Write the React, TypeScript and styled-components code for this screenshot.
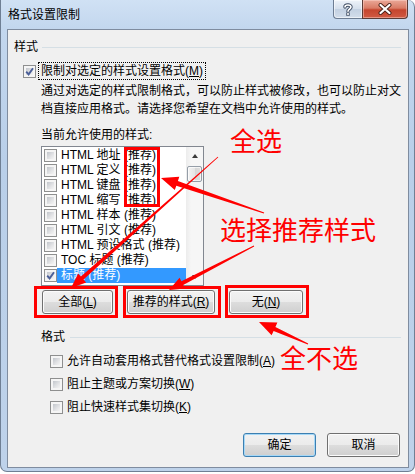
import React from "react";
import styled, { createGlobalStyle } from "styled-components";

const FONT = `"Liberation Sans", "Noto Sans CJK SC", sans-serif`;

const Global = createGlobalStyle`
  html, body { margin: 0; padding: 0; background: #ffffff; }
  body { font-family: ${FONT}; font-size: 12px; color: #000; }
  * { box-sizing: border-box; }
`;

const Window = styled.div`
  position: relative;
  width: 415px;
  height: 472px;
  display: flex;
  flex-direction: column;
  background: linear-gradient(180deg, #d0e1f4 0px, #c3d7ee 28px, #b9cfe9 160px, #bed2ea 100%);
  border: 1px solid #6f7f94;
  border-top: none;
  border-radius: 0 7px 7px 7px;
  overflow: hidden;
`;

const TitleBar = styled.div`
  height: 29px;
  display: flex;
  align-items: flex-start;
  flex: none;
`;

const Title = styled.div`
  padding: 1px 0 0 7px;
  line-height: 28px;
  font-size: 12px;
  color: #000;
`;

const CaptionButtons = styled.div`
  margin-left: auto;
  margin-right: 6px;
  display: flex;
`;

const HelpButton = styled.div`
  width: 29px;
  height: 19px;
  border: 1px solid #6d7d93;
  border-top: none;
  border-right: none;
  border-bottom-left-radius: 4px;
  background: linear-gradient(180deg, #eef3f9 0%, #d6e0ec 48%, #c3d1e2 52%, #d3deeb 100%);
  box-shadow: inset 0 0 0 1px rgba(255, 255, 255, 0.55);
  display: flex;
  align-items: center;
  justify-content: center;
`;

const CloseButton = styled.div`
  width: 46px;
  height: 19px;
  border: 1px solid #5a3b36;
  border-top: none;
  border-bottom-right-radius: 4px;
  background: linear-gradient(180deg, #eaa898 0%, #d97c66 45%, #c5452e 55%, #d15a43 100%);
  box-shadow: inset 0 0 0 1px rgba(255, 220, 210, 0.45);
  display: flex;
  align-items: center;
  justify-content: center;
`;

const Client = styled.div`
  margin: 0 5px 0 6px;
  height: 439px;
  border: 1px solid #7f8c9f;
  background: #f0f0f0;
  display: flex;
  flex-direction: column;
  flex: none;
`;

const GroupHeader = styled.div<{ $top: number; $indent: number }>`
  margin-top: ${(p) => p.$top}px;
  padding-left: ${(p) => p.$indent}px;
  padding-right: 7px;
  height: 16px;
  line-height: 16px;
  display: flex;
  align-items: center;
`;

const Rule = styled.span<{ $gap: number }>`
  flex: 1;
  height: 1px;
  background: #d5dfe5;
  margin-left: ${(p) => p.$gap}px;
`;

const TopOption = styled.div`
  margin-top: 7px;
  padding-left: 15px;
  height: 18px;
  display: flex;
  align-items: center;
`;

const FocusLabel = styled.span`
  margin-left: 2px;
  border: 1px dotted #000;
  padding: 0 2px;
  line-height: 16px;
`;

const Desc = styled.div`
  margin-top: 2px;
  padding-left: 33px;
  line-height: 18px;
  white-space: nowrap;
`;

const DescLine = styled.span`
  display: block;
`;

const Caption = styled.div`
  margin-top: 9px;
  padding-left: 33px;
  line-height: 16px;
`;

const ListBox = styled.div`
  margin-top: 3px;
  margin-left: 33px;
  width: 163px;
  height: 140px;
  border: 1px solid #828790;
  background: #fff;
  display: flex;
  flex: none;
`;

const Rows = styled.div`
  flex: 1;
  padding-top: 1px;
  padding-left: 2px;
  display: flex;
  flex-direction: column;
`;

const Row = styled.div`
  height: 15px;
  display: flex;
  align-items: center;
`;

const RowLabel = styled.span<{ $selected?: boolean }>`
  flex: 1;
  height: 15px;
  line-height: 15px;
  padding-left: 4px;
  white-space: nowrap;
  overflow: hidden;
  background: ${(p) => (p.$selected ? "#3399ff" : "transparent")};
  color: ${(p) => (p.$selected ? "#fff" : "#000")};
`;

const ScrollBar = styled.div`
  width: 17px;
  background: linear-gradient(90deg, #ececec 0%, #f6f6f6 30%, #f6f6f6 100%);
  display: flex;
  flex-direction: column;
  align-items: center;
`;

const ArrowCell = styled.div`
  height: 17px;
  width: 17px;
  display: flex;
  align-items: center;
  justify-content: center;
`;

const Tri = styled.span<{ $down?: boolean }>`
  width: 0;
  height: 0;
  border-left: 3.5px solid transparent;
  border-right: 3.5px solid transparent;
  ${(p) =>
    p.$down
      ? "border-top: 4px solid #3a3a3a;"
      : "border-bottom: 4px solid #3a3a3a;"}
`;

const Thumb = styled.div`
  margin-top: 2px;
  width: 15px;
  height: 16px;
  border: 1px solid #959ea8;
  border-radius: 2px;
  background: linear-gradient(90deg, #f4f4f4 0%, #e6e6e6 50%, #d6d6d6 51%, #dedede 100%);
  box-shadow: inset 0 0 0 1px rgba(255, 255, 255, 0.7);
`;

const Spacer = styled.div`
  flex: 1;
`;

const ButtonRow = styled.div`
  margin-top: 4px;
  padding-left: 34px;
  display: flex;
  gap: 14px;
`;

const Footer = styled.div`
  margin-top: 18px;
  padding-right: 8px;
  display: flex;
  justify-content: flex-end;
  gap: 11px;
`;

const Button = styled.div<{ $w: number; $default?: boolean }>`
  width: ${(p) => p.$w}px;
  height: 24px;
  border: 1px solid ${(p) => (p.$default ? "#3c7fb1" : "#707070")};
  border-radius: 3px;
  background: linear-gradient(180deg, #f2f2f2 0%, #ebebeb 50%, #dddddd 51%, #cfcfcf 100%);
  box-shadow: inset 0 0 0 1px ${(p) => (p.$default ? "#a6d8f7" : "#fbfbfb")};
  display: flex;
  align-items: center;
  justify-content: center;
  line-height: 16px;
  font-size: 12px;
  white-space: nowrap;
`;

const OptionList = styled.div`
  margin-top: 8px;
  padding-left: 42px;
  display: flex;
  flex-direction: column;
  gap: 7px;
`;

const Option = styled.div`
  height: 16px;
  display: flex;
  align-items: center;
`;

const OptionText = styled.span`
  margin-left: 4px;
  line-height: 16px;
  white-space: nowrap;
`;

const TopText = styled.span`
  line-height: 16px;
`;

const Box = styled.span`
  position: relative;
  flex: none;
  width: 13px;
  height: 13px;
  border: 1px solid #8e8f8f;
  padding: 2px;
  background: linear-gradient(135deg, #c2c6cc 0%, #e3e4e6 60%, #f4f4f4 100%) content-box, #f5f5f5;
`;

const CheckMark = styled.svg`
  position: absolute;
  left: 1px;
  top: 1px;
`;

/* ---------- annotations (overlay) ---------- */

const Overlay = styled.div`
  position: absolute;
  inset: 0;
  pointer-events: none;
`;

const RedBox = styled.div<{ $x: number; $y: number; $w: number; $h: number }>`
  position: absolute;
  left: ${(p) => p.$x}px;
  top: ${(p) => p.$y}px;
  width: ${(p) => p.$w}px;
  height: ${(p) => p.$h}px;
  border: 3px solid #ff0000;
`;

const Note = styled.div<{ $x: number; $y: number }>`
  position: absolute;
  left: ${(p) => p.$x}px;
  top: ${(p) => p.$y}px;
  font-family: "Noto Sans CJK SC", sans-serif;
  font-size: 26px;
  line-height: 26px;
  color: #ff0000;
  white-space: nowrap;
`;

const ArrowLayer = styled.svg`
  position: absolute;
  left: 0;
  top: 0;
`;

function Check({ checked }: { checked?: boolean }) {
  return (
    <Box>
      {checked && (
        <CheckMark width="9" height="9" viewBox="0 0 9 9">
          <path d="M1.2 4.6 L3.6 7.4 L8 1.2" fill="none" stroke="#4b5f98" strokeWidth="1.9" />
        </CheckMark>
      )}
    </Box>
  );
}

type Arrow = { t: [number, number]; p: [number, number]; w0: number; w1: number; L: number; H: number };

function arrowPoints(a: Arrow): string {
  const [tx, ty] = a.t;
  const [px, py] = a.p;
  const dx = px - tx;
  const dy = py - ty;
  const len = Math.hypot(dx, dy);
  const ux = dx / len;
  const uy = dy / len;
  const nx = -uy;
  const ny = ux;
  const Nx = px - ux * a.L;
  const Ny = py - uy * a.L;
  const pts: [number, number][] = [
    [tx + (nx * a.w0) / 2, ty + (ny * a.w0) / 2],
    [Nx + (nx * a.w1) / 2, Ny + (ny * a.w1) / 2],
    [Nx + nx * a.H, Ny + ny * a.H],
    [px, py],
    [Nx - nx * a.H, Ny - ny * a.H],
    [Nx - (nx * a.w1) / 2, Ny - (ny * a.w1) / 2],
    [tx - (nx * a.w0) / 2, ty - (ny * a.w0) / 2],
  ];
  return pts.map(([x, y]) => `${x.toFixed(1)},${y.toFixed(1)}`).join(" ");
}

const arrows: Arrow[] = [
  { t: [217, 157], p: [70, 288], w0: 0.8, w1: 4, L: 15, H: 6 },
  { t: [263, 213], p: [160, 178], w0: 1.2, w1: 5, L: 17, H: 7 },
  { t: [253, 246], p: [168, 290], w0: 0.8, w1: 4, L: 15, H: 6 },
  { t: [307, 344], p: [258, 322], w0: 1, w1: 4.5, L: 17, H: 7 },
];

const listItems = [
  "HTML 地址 (推荐)",
  "HTML 定义 (推荐)",
  "HTML 键盘 (推荐)",
  "HTML 缩写 (推荐)",
  "HTML 样本 (推荐)",
  "HTML 引文 (推荐)",
  "HTML 预设格式 (推荐)",
  "TOC 标题 (推荐)",
  "标题 (推荐)",
];

export default function App() {
  return (
    <>
      <Global />
      <Window>
        <TitleBar>
          <Title>格式设置限制</Title>
          <CaptionButtons>
            <HelpButton>
              <svg width="10" height="13" viewBox="0 0 10 13">
                <path
                  d="M2 4 C2 1.5 8 1.2 8 4 C8 6 5 6 5 8.2 M5 10.2 L5 11.8"
                  fill="none"
                  stroke="#3c4a60"
                  strokeWidth="3.4"
                  strokeLinecap="round"
                />
                <path
                  d="M2 4 C2 1.5 8 1.2 8 4 C8 6 5 6 5 8.2 M5 10.2 L5 11.8"
                  fill="none"
                  stroke="#ffffff"
                  strokeWidth="1.6"
                  strokeLinecap="round"
                />
              </svg>
            </HelpButton>
            <CloseButton>
              <svg width="14" height="12" viewBox="0 0 14 12">
                <path d="M2.5 2 L11.5 10 M11.5 2 L2.5 10" stroke="#4a2219" strokeWidth="4" strokeLinecap="round" />
                <path d="M2.5 2 L11.5 10 M11.5 2 L2.5 10" stroke="#ffffff" strokeWidth="2.2" strokeLinecap="round" />
              </svg>
            </CloseButton>
          </CaptionButtons>
        </TitleBar>

        <Client>
          <GroupHeader $top={9} $indent={6}>
            <span>样式</span>
            <Rule $gap={4} />
          </GroupHeader>

          <TopOption>
            <Check checked />
            <FocusLabel>
              <TopText>
                限制对选定的样式设置格式(<u>M</u>)
              </TopText>
            </FocusLabel>
          </TopOption>

          <Desc>
            <DescLine>通过对选定的样式限制格式，可以防止样式被修改，也可以防止对文</DescLine>
            <DescLine>档直接应用格式。请选择您希望在文档中允许使用的样式。</DescLine>
          </Desc>

          <Caption>当前允许使用的样式:</Caption>

          <ListBox>
            <Rows>
              {listItems.map((item, i) => (
                <Row key={item}>
                  <Check checked={i === listItems.length - 1} />
                  <RowLabel $selected={i === listItems.length - 1}>{item}</RowLabel>
                </Row>
              ))}
            </Rows>
            <ScrollBar>
              <ArrowCell>
                <Tri />
              </ArrowCell>
              <Thumb />
              <Spacer />
              <ArrowCell>
                <Tri $down />
              </ArrowCell>
            </ScrollBar>
          </ListBox>

          <ButtonRow>
            <Button $w={71}>
              全部(<u>L</u>)
            </Button>
            <Button $w={88}>
              推荐的样式(<u>R</u>)
            </Button>
            <Button $w={74}>
              无(<u>N</u>)
            </Button>
          </ButtonRow>

          <GroupHeader $top={15} $indent={33}>
            <span>格式</span>
            <Rule $gap={5} />
          </GroupHeader>

          <OptionList>
            <Option>
              <Check />
              <OptionText>
                允许自动套用格式替代格式设置限制(<u>A</u>)
              </OptionText>
            </Option>
            <Option>
              <Check />
              <OptionText>
                阻止主题或方案切换(<u>W</u>)
              </OptionText>
            </Option>
            <Option>
              <Check />
              <OptionText>
                阻止快速样式集切换(<u>K</u>)
              </OptionText>
            </Option>
          </OptionList>

          <Footer>
            <Button $w={73} $default>
              确定
            </Button>
            <Button $w={73}>取消</Button>
          </Footer>
        </Client>

        <Overlay>
          <RedBox $x={123} $y={147} $w={36} $h={60} />
          <RedBox $x={33} $y={286} $w={84} $h={32} />
          <RedBox $x={122} $y={286} $w={98} $h={32} />
          <RedBox $x={224} $y={285} $w={84} $h={33} />
          <Note $x={229} $y={127}>全选</Note>
          <Note $x={219} $y={216}>选择推荐样式</Note>
          <Note $x={279} $y={344}>全不选</Note>
          <ArrowLayer width="415" height="474" viewBox="0 0 415 474">
            {arrows.map((a, i) => (
              <polygon key={i} points={arrowPoints(a)} fill="#ff0000" />
            ))}
          </ArrowLayer>
        </Overlay>
      </Window>
    </>
  );
}
